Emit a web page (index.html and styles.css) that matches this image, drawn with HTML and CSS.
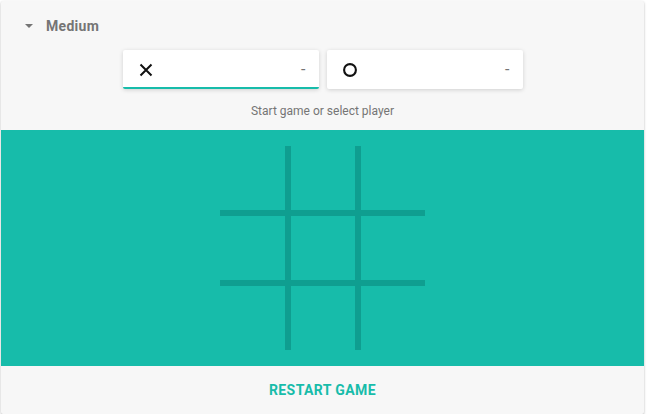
FILE: index.html
```html
<!DOCTYPE html>
<html>
<head>
<meta charset="utf-8">
<link rel="stylesheet" href="styles.css">
</head>
<body>
<div class="card">
  <div class="header">
    <span class="caret"></span>
    <span class="level">Medium</span>
  </div>
  <div class="players">
    <div class="player active">
      <svg class="mark" width="14" height="14" viewBox="0 0 14 14"><path d="M1.5 1.5 L12.5 12.5 M12.5 1.5 L1.5 12.5" stroke="#111" stroke-width="2" fill="none"/></svg>
      <span class="score">-</span>
    </div>
    <div class="player">
      <svg class="mark" width="14" height="14" viewBox="0 0 14 14"><circle cx="7" cy="7" r="5.9" stroke="#111" stroke-width="2.1" fill="none"/></svg>
      <span class="score">-</span>
    </div>
  </div>
  <div class="status">Start game or select player</div>
  <div class="board">
    <div class="grid">
      <div class="cell"></div><div class="cell"></div><div class="cell"></div>
      <div class="cell"></div><div class="cell"></div><div class="cell"></div>
      <div class="cell"></div><div class="cell"></div><div class="cell"></div>
    </div>
  </div>
  <div class="footer">
    <span class="restart">RESTART GAME</span>
  </div>
</div>
</body>
</html>
```
FILE: styles.css
```css
html, body {
  margin: 0;
  padding: 0;
  background: #ffffff;
}
body {
  font-family: Roboto, "Liberation Sans", Arial, sans-serif;
  padding: 1px 0 0 1px;
}
.card {
  width: 643px;
  background: #f7f7f7;
  box-shadow: 0 1px 3px rgba(0,0,0,0.18), 0 1px 2px rgba(0,0,0,0.12);
  border-radius: 2px;
  overflow: hidden;
}
.header {
  height: 49px;
  display: flex;
  align-items: center;
  padding-left: 24px;
}
.caret {
  width: 0;
  height: 0;
  border-left: 4px solid transparent;
  border-right: 4px solid transparent;
  border-top: 4px solid #757575;
  margin-right: 13px;
  margin-top: 1px;
}
.level {
  font-size: 14px;
  font-weight: 700;
  color: #757575;
  letter-spacing: 0.3px;
}
.players {
  display: flex;
  justify-content: center;
  gap: 8px;
}
.player {
  width: 196px;
  height: 39px;
  box-sizing: border-box;
  background: #ffffff;
  border-radius: 2px;
  box-shadow: 0 1px 4px rgba(0,0,0,0.16);
  display: flex;
  align-items: center;
  justify-content: space-between;
  padding: 0 13px 0 16px;
}
.player.active {
  border-bottom: 2px solid #17bcaa;
  padding-top: 2px;
}
.mark {
  display: block;
}
.score {
  font-size: 16px;
  color: #757575;
}
.status {
  margin-top: 14px;
  height: 16px;
  line-height: 16px;
  font-size: 12px;
  color: #757575;
  text-align: center;
  margin-bottom: 11px;
}
.board {
  background: #17bcaa;
  height: 236px;
  display: flex;
  justify-content: center;
  align-items: center;
}
.grid {
  display: grid;
  grid-template-columns: 65px 64px 64px;
  grid-template-rows: 64px 64px 64px;
  gap: 6px;
  background: #0f9e90;
}
.cell {
  background: #17bcaa;
}
.footer {
  height: 48px;
  display: flex;
  align-items: center;
  justify-content: center;
}
.restart {
  font-size: 14px;
  font-weight: 700;
  color: #17bcaa;
  letter-spacing: 0.4px;
}
```
